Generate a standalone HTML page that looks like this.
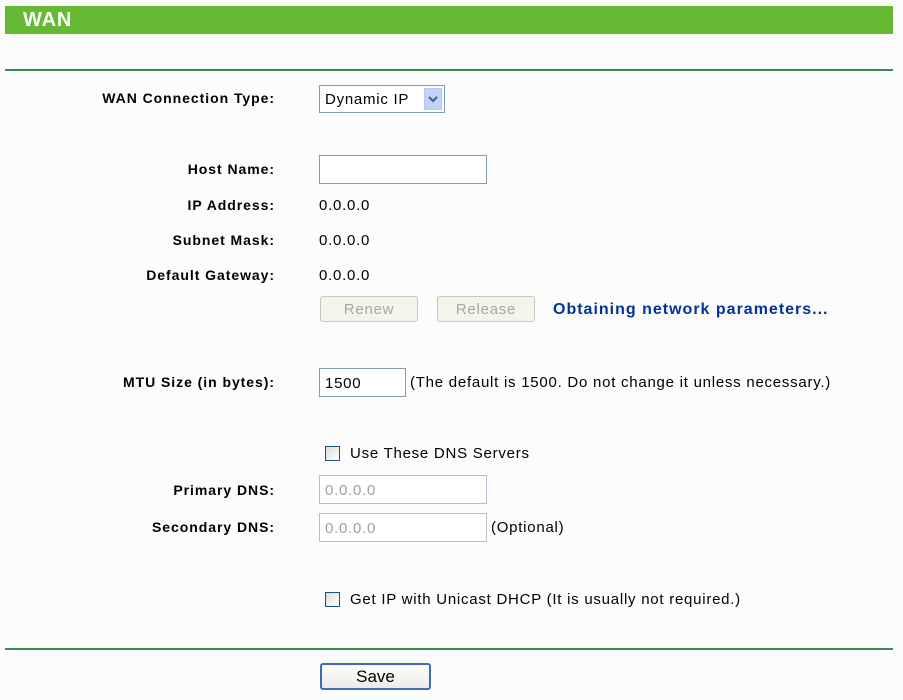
<!DOCTYPE html>
<html><head><style>
body{margin:0;width:903px;height:700px;background:#fcfcfc;font-family:"Liberation Sans",Arial,sans-serif;font-size:15px;color:#000;position:relative;overflow:hidden;letter-spacing:0.75px}
.a{position:absolute;white-space:nowrap}
.lbl{position:absolute;right:628px;font-weight:bold;font-size:14px;white-space:nowrap;letter-spacing:0.95px}
.bar{position:absolute;left:5px;top:6px;width:888px;height:28px;background:#66b933;color:#fff;font-weight:bold;font-size:20px;line-height:28px;letter-spacing:0.8px}
.hr{position:absolute;left:5px;width:888px;height:2px;background:#3a8a5a}
.inp{position:absolute;border:1px solid #7f9db9;background:#fff;height:27px;box-sizing:border-box;font-size:15px;line-height:27px;padding-left:5px}
.btn{position:absolute;border:1px solid #c9c7ba;border-radius:3px;background:#f5f4ea;color:#a8a8a0;height:26px;box-sizing:border-box;text-align:center;line-height:26px;font-size:15px}
.cb{position:absolute;width:15px;height:15px;border:1px solid #1c5180;box-sizing:border-box;background:linear-gradient(135deg,#dcdcd7,#fff)}
</style></head><body>
<div class="bar"><span style="margin-left:18px">WAN</span></div>
<div class="hr" style="top:69px"></div>
<div class="lbl" style="top:90px">WAN Connection Type:</div>
<div class="inp" style="left:319px;top:85px;width:126px;height:28px;line-height:28px">Dynamic IP</div>
<div class="a" style="left:424px;top:88px;width:18px;height:22px;background:#c1d3fb;border:1px solid #b4c8f5;box-sizing:border-box"><svg width="16" height="20" viewBox="0 0 16 20"><path d="M4 8 L8 12 L12 8" fill="none" stroke="#4d6185" stroke-width="2.2"/></svg></div>
<div class="lbl" style="top:161px">Host Name:</div>
<div class="inp" style="left:319px;top:155px;width:168px;height:29px"></div>
<div class="lbl" style="top:197px">IP Address:</div>
<div class="a" style="left:319px;top:197px">0.0.0.0</div>
<div class="lbl" style="top:232px">Subnet Mask:</div>
<div class="a" style="left:319px;top:232px">0.0.0.0</div>
<div class="lbl" style="top:267px">Default Gateway:</div>
<div class="a" style="left:319px;top:267px">0.0.0.0</div>
<div class="btn" style="left:320px;top:296px;width:98px">Renew</div>
<div class="btn" style="left:437px;top:296px;width:98px">Release</div>
<div class="a" style="left:553px;top:301px;font-weight:bold;color:#003399;font-size:16px;letter-spacing:1px">Obtaining network parameters...</div>
<div class="lbl" style="top:374px">MTU Size (in bytes):</div>
<div class="inp" style="left:319px;top:368px;width:87px;height:29px;line-height:29px">1500</div>
<div class="a" style="left:410px;top:374px">(The default is 1500. Do not change it unless necessary.)</div>
<div class="cb" style="left:325px;top:446px"></div>
<div class="a" style="left:350px;top:445px">Use These DNS Servers</div>
<div class="lbl" style="top:482px">Primary DNS:</div>
<div class="inp" style="left:319px;top:475px;width:168px;height:29px;line-height:29px;color:#a0a0a0;border-color:#b0c0d0">0.0.0.0</div>
<div class="lbl" style="top:519px">Secondary DNS:</div>
<div class="inp" style="left:319px;top:513px;width:168px;height:29px;line-height:29px;color:#a0a0a0;border-color:#b0c0d0">0.0.0.0</div>
<div class="a" style="left:491px;top:519px">(Optional)</div>
<div class="cb" style="left:325px;top:592px"></div>
<div class="a" style="left:350px;top:591px">Get IP with Unicast DHCP (It is usually not required.)</div>
<div class="hr" style="top:648px"></div>
<div class="a" style="left:320px;top:663px;width:111px;height:27px;box-sizing:border-box;border:2px solid #3c6cc0;border-radius:3px;background:linear-gradient(#fff,#ecebe4);text-align:center;line-height:24px;font-size:17px;letter-spacing:0">Save</div>
</body></html>
